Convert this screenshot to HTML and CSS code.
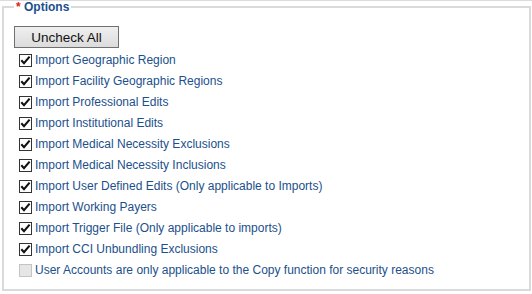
FILE: index.html
```html
<!DOCTYPE html>
<html>
<head>
<meta charset="utf-8">
<link rel="stylesheet" href="styles.css">
</head>
<body>
<div class="topline"></div>
<fieldset class="options">
  <legend class="legend"><span class="req">*</span> Options</legend>
  <button class="btn" type="button">Uncheck All</button>
  <div class="list">
    <label class="row"><span class="box"><svg viewBox="0 0 13 13" width="13" height="13"><path d="M2.3 6.3 L5 9.2 L10.6 2.6" fill="none" stroke="#111" stroke-width="2.1"/></svg></span><span class="txt">Import Geographic Region</span></label>
    <label class="row"><span class="box"><svg viewBox="0 0 13 13" width="13" height="13"><path d="M2.3 6.3 L5 9.2 L10.6 2.6" fill="none" stroke="#111" stroke-width="2.1"/></svg></span><span class="txt">Import Facility Geographic Regions</span></label>
    <label class="row"><span class="box"><svg viewBox="0 0 13 13" width="13" height="13"><path d="M2.3 6.3 L5 9.2 L10.6 2.6" fill="none" stroke="#111" stroke-width="2.1"/></svg></span><span class="txt">Import Professional Edits</span></label>
    <label class="row"><span class="box"><svg viewBox="0 0 13 13" width="13" height="13"><path d="M2.3 6.3 L5 9.2 L10.6 2.6" fill="none" stroke="#111" stroke-width="2.1"/></svg></span><span class="txt">Import Institutional Edits</span></label>
    <label class="row"><span class="box"><svg viewBox="0 0 13 13" width="13" height="13"><path d="M2.3 6.3 L5 9.2 L10.6 2.6" fill="none" stroke="#111" stroke-width="2.1"/></svg></span><span class="txt">Import Medical Necessity Exclusions</span></label>
    <label class="row"><span class="box"><svg viewBox="0 0 13 13" width="13" height="13"><path d="M2.3 6.3 L5 9.2 L10.6 2.6" fill="none" stroke="#111" stroke-width="2.1"/></svg></span><span class="txt">Import Medical Necessity Inclusions</span></label>
    <label class="row"><span class="box"><svg viewBox="0 0 13 13" width="13" height="13"><path d="M2.3 6.3 L5 9.2 L10.6 2.6" fill="none" stroke="#111" stroke-width="2.1"/></svg></span><span class="txt">Import User Defined Edits (Only applicable to Imports)</span></label>
    <label class="row"><span class="box"><svg viewBox="0 0 13 13" width="13" height="13"><path d="M2.3 6.3 L5 9.2 L10.6 2.6" fill="none" stroke="#111" stroke-width="2.1"/></svg></span><span class="txt">Import Working Payers</span></label>
    <label class="row"><span class="box"><svg viewBox="0 0 13 13" width="13" height="13"><path d="M2.3 6.3 L5 9.2 L10.6 2.6" fill="none" stroke="#111" stroke-width="2.1"/></svg></span><span class="txt">Import Trigger File (Only applicable to imports)</span></label>
    <label class="row"><span class="box"><svg viewBox="0 0 13 13" width="13" height="13"><path d="M2.3 6.3 L5 9.2 L10.6 2.6" fill="none" stroke="#111" stroke-width="2.1"/></svg></span><span class="txt">Import CCI Unbundling Exclusions</span></label>
    <label class="row"><span class="box disabled"></span><span class="txt">User Accounts are only applicable to the Copy function for security reasons</span></label>
  </div>
</fieldset>
</body>
</html>
```

FILE: styles.css
```css
html, body {
  margin: 0;
  padding: 0;
  background: #fff;
}
body {
  font-family: Arial, "Liberation Sans", sans-serif;
  font-size: 12px;
  color: #1b508c;
}
.topline {
  height: 0;
  border-top: 1px solid #dcdcdc;
}
.options {
  margin: 0 1px 0 2px;
  padding: 13px 10px 8px 10px;
  border: 2px solid #dadada;
  min-width: 0;
}
.legend {
  padding: 0 2px;
  font-weight: bold;
  font-size: 12px;
  line-height: 12px;
  color: #1b508c;
}
.req {
  color: #e0201e;
}
.btn {
  display: block;
  width: 105px;
  height: 22px;
  margin: 0;
  padding: 0;
  border: 1px solid #707070;
  border-radius: 0;
  background: linear-gradient(#efefef, #dcdcdc);
  font-family: Arial, "Liberation Sans", sans-serif;
  font-size: 13.5px;
  color: #111;
}
.list {
  display: flex;
  flex-direction: column;
  padding-left: 5px;
  margin-top: 2px;
}
.row {
  display: flex;
  align-items: center;
  height: 21px;
  gap: 3px;
}
.box {
  width: 13px;
  height: 13px;
  box-sizing: border-box;
  border: 1px solid #333;
  background: #fff;
  margin-bottom: 1px;
  position: relative;
}
.box svg {
  display: block;
  margin: -1px 0 0 -1px;
}
.box.disabled {
  border-color: #c4c4c4;
  background: #e6e6e6;
}
.txt {
  white-space: nowrap;
  line-height: 21px;
}
```
